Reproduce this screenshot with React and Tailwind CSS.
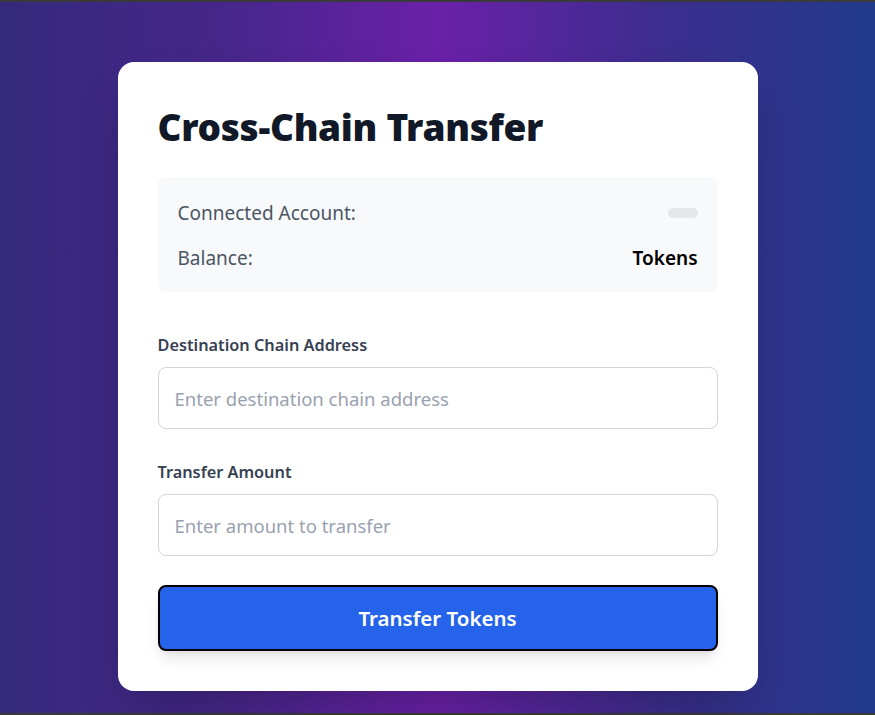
export default function App() {
  return (
    <div className="flex h-[715px] w-full flex-col bg-[#3a3a3a]" style={{ fontFamily: '"Noto Sans", "Open Sans", sans-serif' }}>
      <div className="mt-[2px] mb-[2px] flex flex-1 justify-center bg-[linear-gradient(to_right,#34297c_0%,#45278a_25%,#6a20a8_50%,#3d2d8e_75%,#213a8b_100%)] pt-[60px]">
        <div className="h-[629px] w-[640px] rounded-2xl bg-white px-10 pt-10 shadow-2xl">
          <h1 className="mb-[28px] pt-[3px] text-[37px] font-black leading-[44px] tracking-[-0.3px] text-[#111827]">Cross-Chain Transfer</h1>
          <div className="flex flex-col gap-[17px] rounded-lg bg-[#f8f9fb] px-5 pt-[22px] pb-5">
            <div className="flex h-7 items-center justify-between text-[19px] leading-7">
              <span className="text-[#4b5563]">Connected Account:</span>
              <span className="h-[10px] w-[30px] rounded-full bg-gray-200"></span>
            </div>
            <div className="flex h-7 items-center justify-between text-[19px] leading-7">
              <span className="text-[#4b5563]">Balance:</span>
              <span className="font-semibold text-black">Tokens</span>
            </div>
          </div>
          <div className="mt-[41px]">
            <label className="mb-[10px] block text-[16.3px] font-semibold leading-6 text-[#374151]">Destination Chain Address</label>
            <input className="block h-[62px] w-full rounded-lg border border-gray-300 px-4 text-[18.5px] text-gray-900 outline-none placeholder:text-gray-400" placeholder="Enter destination chain address" />
          </div>
          <div className="mt-[31px]">
            <label className="mb-[10px] block text-[16.3px] font-semibold leading-6 text-[#374151]">Transfer Amount</label>
            <input className="block h-[62px] w-full rounded-lg border border-gray-300 px-4 text-[18.5px] text-gray-900 outline-none placeholder:text-gray-400" placeholder="Enter amount to transfer" />
          </div>
          <button className="mt-[29px] flex h-[66px] w-full items-center justify-center rounded-lg border-2 border-black bg-[#2563eb] text-[20.5px] font-semibold text-white shadow-lg">Transfer Tokens</button>
        </div>
      </div>
    </div>
  );
}
